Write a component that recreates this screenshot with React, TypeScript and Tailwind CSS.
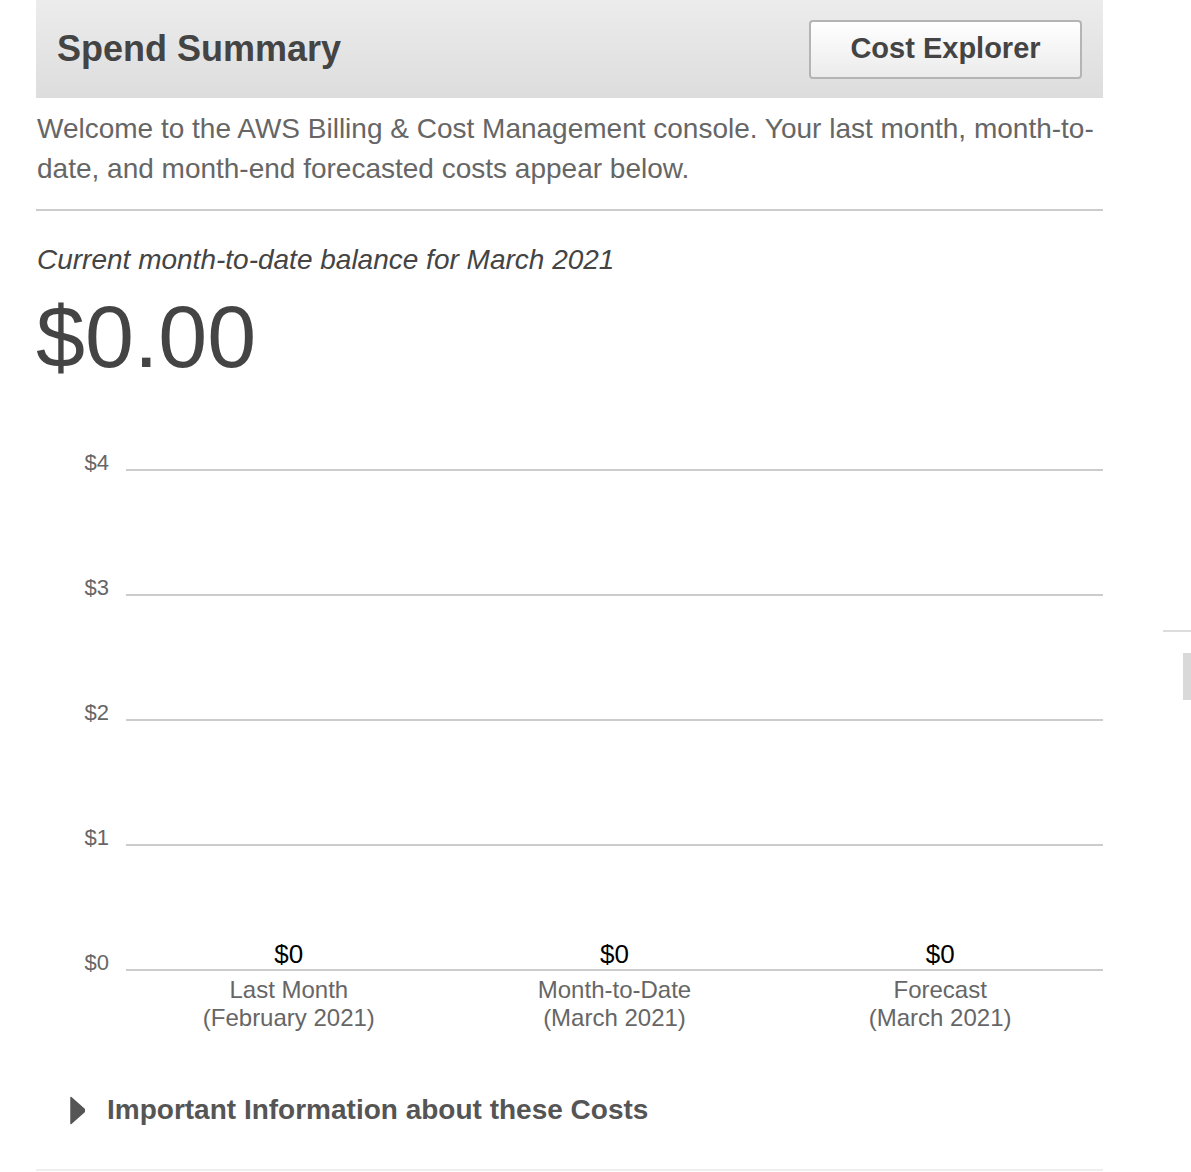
import React from "react";

const font = { fontFamily: '"Liberation Sans", Arial, sans-serif' };

const ticks = ["$4", "$3", "$2", "$1"];

const bars = [
  { value: "$0", label: "Last Month", period: "(February 2021)" },
  { value: "$0", label: "Month-to-Date", period: "(March 2021)" },
  { value: "$0", label: "Forecast", period: "(March 2021)" },
];

export default function App() {
  return (
    <div className="relative min-h-[1172px] bg-white" style={font}>
      <div className="ml-[36px] w-[1067px]">
        {/* Header */}
        <div className="flex h-[98px] items-center justify-between bg-gradient-to-b from-[#ececec] to-[#dddddd] pl-[21px] pr-[21px]">
          <h1 className="text-[36px] font-bold leading-none text-[#444]">Spend Summary</h1>
          <button className="h-[59px] w-[273px] rounded-[4px] border-2 border-[#b4b4b4] bg-gradient-to-b from-white to-[#ebebeb] text-[29px] font-bold text-[#444]">
            Cost Explorer
          </button>
        </div>

        <p className="mt-[11px] pl-[1px] text-[28px] leading-[40px] text-[#666]">
          Welcome to the AWS Billing &amp; Cost Management console. Your last month, month-to-date, and month-end forecasted costs appear below.
        </p>
        <div className="mt-[20px] h-[2px] bg-[#cccccc]" />

        <p className="mt-[31px] pl-[1px] text-[28px] italic leading-[36px] text-[#444]">
          Current month-to-date balance for March 2021
        </p>
        <div className="mt-[14px] text-[88px] leading-[90px] text-[#444]">$0.00</div>

        {/* Chart */}
        <div className="mt-[49px]">
          {ticks.map((t, i) => (
            <div key={t} className={`flex items-end ${i === 0 ? "h-[40px]" : "h-[125px]"}`}>
              <span className="mb-[-4px] w-[73px] text-right text-[22px] leading-[24px] text-[#666]">{t}</span>
              <div className="ml-[17px] h-[2px] flex-1 bg-[#cccccc]" />
            </div>
          ))}
          <div className="flex h-[125px] items-end">
            <span className="mb-[-4px] w-[73px] text-right text-[22px] leading-[24px] text-[#666]">$0</span>
            <div className="ml-[17px] flex flex-1 flex-col">
              <div className="grid grid-cols-3 text-center text-[26px] leading-[30px] text-black">
                {bars.map((b, i) => (
                  <span key={i}>{b.value}</span>
                ))}
              </div>
              <div className="h-[2px] bg-[#cccccc]" />
            </div>
          </div>
          <div className="ml-[90px] mt-[5px] grid grid-cols-3 text-center text-[24px] leading-[28px] text-[#666]">
            {bars.map((b, i) => (
              <div key={i}>
                <div>{b.label}</div>
                <div>{b.period}</div>
              </div>
            ))}
          </div>
        </div>

        {/* Important info */}
        <div className="mt-[62px] flex items-center pl-[34px]">
          <svg width="15" height="29" viewBox="0 0 15 29" className="shrink-0">
            <path d="M1 1.5 L14 13 Q15 14.5 14 16 L1 27.5 Z" fill="#555" stroke="#555" strokeWidth="1.5" strokeLinejoin="round" />
          </svg>
          <span className="ml-[22px] text-[28px] font-bold leading-[32px] text-[#555]">
            Important Information about these Costs
          </span>
        </div>
        <div className="mt-[43px] h-[2px] bg-[#eeeeee]" />
      </div>

      {/* right edge fragments */}
      <div className="absolute left-[1163px] top-[630px] h-[2px] w-[28px] bg-[#dddddd]" />
      <div className="absolute left-[1183px] top-[653px] h-[47px] w-[8px] bg-[#d9d9d9]" />
    </div>
  );
}
